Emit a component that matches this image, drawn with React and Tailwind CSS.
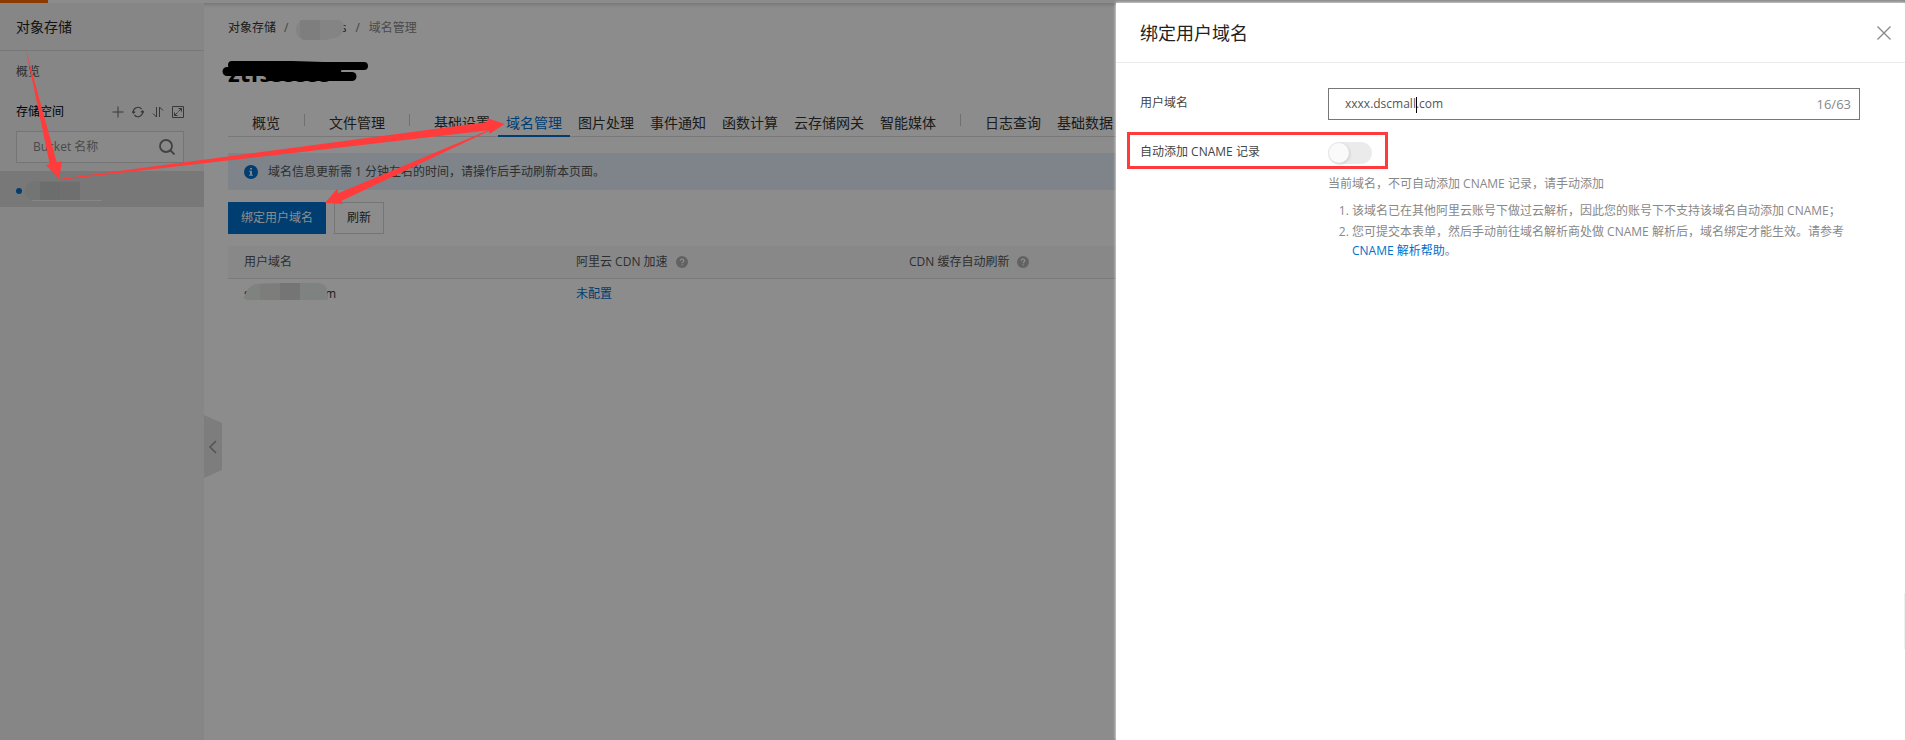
import { useState } from "react";

const tabs = [
  "概览", "|", "文件管理", "|", "基础设置", "域名管理", "图片处理", "事件通知",
  "函数计算", "云存储网关", "智能媒体", "|", "日志查询", "基础数据",
];

function HelpIcon() {
  return (
    <svg className="ml-2 h-3 w-3 shrink-0" viewBox="0 0 12 12">
      <circle cx="6" cy="6" r="6" fill="#b3b3b3" />
      <path d="M4.3 4.8c0-2.3 3.5-2.2 3.5 0 0 1.2-1.7 1.3-1.7 2.5M6.1 8.3v1.2" fill="none" stroke="#fff" strokeWidth="1.2" />
    </svg>
  );
}

function Sidebar() {
  return (
    <aside className="w-[204px] shrink-0 bg-[#f4f4f4]">
      <h2 className="border-b border-[#dcdcdc] px-4 pt-3.5 pb-[13px] text-sm leading-5 text-[#222]">对象存储</h2>
      <a href="#overview" className="mt-[11px] block px-4 text-xs leading-5 text-[#555]">概览</a>
      <div className="mt-5 flex items-center justify-between pr-5 pl-4">
        <span className="text-xs leading-5 text-black">存储空间</span>
        <div className="flex gap-2 text-[#666]">
          <button aria-label="新建">
            <svg className="h-3 w-3" viewBox="0 0 12 12" fill="none" stroke="currentColor"><path d="M6 .5v11M.5 6h11" /></svg>
          </button>
          <button aria-label="刷新列表">
            <svg className="h-3 w-3" viewBox="0 0 12 12" fill="none" stroke="currentColor" strokeWidth="1.1">
              <path d="M1.4 6.8A4.6 4.6 0 0 1 9.6 3.2M10.6 5.2A4.6 4.6 0 0 1 2.4 8.8" />
              <path d="M0 5.2l1.4 2 1.8-1.6M12 6.8l-1.4-2-1.8 1.6" />
            </svg>
          </button>
          <button aria-label="排序">
            <svg className="h-3 w-3" viewBox="0 0 12 12" fill="none" stroke="currentColor"><path d="M4.5 1v10L1 7.500M7.500 11V1L11 4.500" /></svg>
          </button>
          <button aria-label="展开">
            <svg className="h-3 w-3" viewBox="0 0 12 12" fill="none" stroke="currentColor">
              <path d="M.5.5h11v11H.500zM6.500 2.500h3v3M9.500 2.500L6.500 5.500M2.500 6.500v3h3M2.500 9.500l3-3" />
            </svg>
          </button>
        </div>
      </div>
      <label className="mt-[9px] mr-5 ml-4 flex h-8 items-center border border-[#d5d5d5] bg-[#fafafa] pr-2 pl-4">
        <input
          aria-label="Bucket 名称"
          placeholder="Bucket 名称"
          className="w-full min-w-0 bg-transparent text-xs leading-5 outline-none placeholder:text-[#888]"
        />
        <svg className="h-4 w-4 shrink-0" viewBox="0 0 16 16" fill="none" stroke="#777" strokeWidth="1.8">
          <circle cx="7" cy="7" r="6" />
          <path d="M11.500 11.500l4 4" />
        </svg>
      </label>
      <div className="mt-2 flex h-9 items-center bg-[#dadada] px-4 pt-1">
        <span className="h-1.5 w-1.5 rounded-full bg-[#0070cc]" />
      </div>
    </aside>
  );
}

function Tabs() {
  return (
    <nav className="mt-4 flex h-[34px] items-stretch border-b border-[#dcdcdc] pl-4 text-sm leading-5 whitespace-nowrap text-[#333]">
      {tabs.map((tab, i) =>
        tab === "|" ? (
          <span key={i} className="mx-4 my-auto h-3 w-px shrink-0 bg-[#ccc]" />
        ) : (
          <a
            key={i}
            href={`#tab-${i}`}
            className={
              tab === "域名管理"
                ? "-mb-px shrink-0 border-b-2 border-[#0070cc] px-2 pt-2.5 text-[#0070cc]"
                : "shrink-0 px-2 pt-2.5"
            }
          >
            {tab}
          </a>
        )
      )}
    </nav>
  );
}

function DomainTable() {
  return (
    <table className="mt-3 w-full table-fixed border-collapse text-left text-xs leading-5">
      <colgroup>
        <col className="w-[332px]" />
        <col className="w-[333px]" />
        <col />
      </colgroup>
      <thead>
        <tr className="h-8 border-b border-[#dedede] bg-[#f8f8f8] text-[#555]">
          <th className="px-4 font-normal">用户域名</th>
          <th className="px-4 font-normal">
            <span className="flex items-center">阿里云 CDN 加速<HelpIcon /></span>
          </th>
          <th className="px-4 font-normal">
            <span className="flex items-center">CDN 缓存自动刷新<HelpIcon /></span>
          </th>
        </tr>
      </thead>
      <tbody>
        <tr className="h-8 text-[#333]">
          <td className="px-4">
            <span className="flex w-[92px] justify-between"><span>s</span><span>m</span></span>
          </td>
          <td className="px-4"><a href="#cdn" className="text-[#0070cc]">未配置</a></td>
          <td />
        </tr>
      </tbody>
    </table>
  );
}

function Content() {
  return (
    <main className="min-w-0 flex-1 overflow-hidden px-6">
      <div className="flex pt-[15px] text-xs leading-5 text-[#333]">
        <a href="#oss">对象存储</a>
        <span className="ml-2 text-[#777]">/</span>
        <span className="w-[58px] text-right">s</span>
        <span className="mx-[9px] text-[#777]">/</span>
        <span className="text-[#888]">域名管理</span>
      </div>
      <h1 className="mt-[21px] text-2xl leading-7 font-bold text-black">ztfssssss</h1>
      <Tabs />
      <div className="mt-4 flex h-[37px] items-center bg-[#e5f0fa] pl-4 text-xs leading-5 text-[#555]">
        <svg className="mr-2.5 h-3.5 w-3.5" viewBox="0 0 14 14">
          <circle cx="7" cy="7" r="7" fill="#0070cc" />
          <path d="M6 3h2v1.600H6zM5.200 5.800H8v4h1v1H5v-1h1v-3h-.800z" fill="#e5f0fa" />
        </svg>
        域名信息更新需 1 分钟左右的时间，请操作后手动刷新本页面。
      </div>
      <div className="mt-3 flex gap-2 text-xs leading-5">
        <button className="h-8 bg-[#0070cc] px-[13px] text-white">绑定用户域名</button>
        <button className="h-8 border border-[#d5d5d5] px-3 text-[#333]">刷新</button>
      </div>
      <DomainTable />
    </main>
  );
}

function Drawer() {
  const [domain, setDomain] = useState("xxxx.dscmall.com");
  const [auto, setAuto] = useState(false);
  return (
    <section
      role="dialog"
      aria-label="绑定用户域名"
      className="absolute top-[3px] right-0 bottom-0 w-[789px] max-w-full bg-white shadow-[0_0_3px_#fff]"
    >
      <header className="flex h-[60px] items-center justify-between border-b border-[#ebebeb] pr-3.5 pl-6">
        <h2 className="text-lg leading-6 text-[#222]">绑定用户域名</h2>
        <button aria-label="关闭">
          <svg className="h-3.5 w-3.5" viewBox="0 0 14 14" fill="none" stroke="#888" strokeWidth="1.3">
            <path d="M.500.500l13 13M13.500.500l-13 13" />
          </svg>
        </button>
      </header>
      <form className="pt-[25px] pr-[45px] pl-6 text-xs leading-5 text-[#444]">
        <div className="flex">
          <label htmlFor="domain" className="w-[188px] shrink-0 pt-[5px]">用户域名</label>
          <div className="relative flex h-8 flex-1 items-center border border-[#777] pr-2 pl-4">
            <input
              id="domain"
              value={domain}
              maxLength={63}
              onChange={(e) => setDomain(e.target.value)}
              className="min-w-0 flex-1 text-xs leading-5 text-[#555] outline-none"
            />
            <span className="absolute top-2 left-[87px] h-4 w-px bg-black" />
            <span className="text-[13px] text-[#888]">{domain.length}/63</span>
          </div>
        </div>
        <div className="relative mt-[22px] flex h-[22px] items-center">
          <label htmlFor="cname" className="w-[188px] shrink-0 pb-0.5">自动添加 CNAME 记录</label>
          <input
            id="cname"
            type="checkbox"
            role="switch"
            checked={auto}
            onChange={(e) => setAuto(e.target.checked)}
            className="h-[22px] w-11 appearance-none rounded-full bg-[#ebebeb] before:block before:h-5 before:w-5 before:translate-x-px before:translate-y-px before:rounded-full before:bg-[#fafafa] before:shadow-[1px_1px_3px_#ccc] checked:bg-[#0070cc] checked:before:translate-x-[23px]"
          />
          <span className="absolute -top-2.5 -left-[13px] h-[37px] w-[261px] border-[3px] border-[#ff3b3b]" />
        </div>
        <div className="ml-[188px] text-[#888]">
          <p className="mt-2.5">当前域名，不可自动添加 CNAME 记录，请手动添加</p>
          <ol className="mt-[7px] list-decimal pl-6 leading-[19px]">
            <li className="mb-0.5">该域名已在其他阿里云账号下做过云解析，因此您的账号下不支持该域名自动添加 CNAME；</li>
            <li>
              您可提交本表单，然后手动前往域名解析商处做 CNAME 解析后，域名绑定才能生效。请参考{" "}
              <a href="#help" className="whitespace-nowrap text-[#0070cc]">CNAME 解析帮助</a>。
            </li>
          </ol>
        </div>
      </form>
      <span className="absolute top-[590px] right-0 h-14 w-px bg-[#f0f0f0]" />
    </section>
  );
}

// arrows and smudges drawn over the whole page
function Annotations() {
  return (
    <svg className="pointer-events-none absolute top-0 left-0" width="560" height="310" viewBox="0 0 560 310">
      <path d="M35 181h45v20H35a10 10 0 0 1 0-20z" fill="#727574" />
      <path d="M40 182h20v18H40z" fill="#6c6e6d" />
      <path d="M60 182h20v18H60z" fill="#6f6f6f" />
      <path d="M32 200.500h70" stroke="#868686" />
      <path d="M306 20h33q5 1 5 8 0 7-9 10l-10 2h-20q-9-2-9-10 0-9 10-10z" fill="#848484" />
      <path d="M300 20h20v20h-14q-6 0-6-6z" fill="#7e7e7e" />
      <path d="M255 284l14-1h50q9 2 8 9l1 8h-80q-4 0-3-4 1-8 10-12z" fill="#7e8281" />
      <path d="M260 284h20v16h-20z" fill="#7d7d7c" />
      <path d="M280 283h20v17h-20z" fill="#757575" />
      <g fill="none" stroke="#000" strokeLinecap="round" strokeLinejoin="round">
        <path d="M232 65h60l32 1h40" strokeWidth="8" />
        <path d="M227 71.500h50l60-2M240 71h70" strokeWidth="9" />
        <path d="M270 76.500h82" strokeWidth="9" />
      </g>
      <g fill="#ff3b3b">
        <path d="M26 50L56.700 162.300 62 161.300 59 179 46 165 49.700 164z" />
        <path d="M59 179L487.500 122 487 118 504.500 124 489.500 134 489 130.300 59 180z" />
        <path d="M489 130L338.300 193.300 337 189 325 203 342.700 204 341.700 200.700 489 131z" />
      </g>
    </svg>
  );
}

export default function App() {
  return (
    <div className="relative flex min-h-screen flex-col overflow-hidden bg-white font-['Open_Sans','Noto_Sans_CJK_SC',sans-serif]">
      <div className="h-[3px] bg-white shadow-[0_1px_4px_#bbb]">
        <div className="h-full w-12 bg-[#ff6a00]" />
      </div>
      <div className="relative flex flex-1">
        <Sidebar />
        <Content />
        <button aria-label="收起" className="absolute top-[412px] left-[204px]">
          <svg className="h-[63px] w-[18px]" viewBox="0 0 18 63">
            <path d="M0 0l18 8v47L0 63z" fill="#e4e4e4" />
            <path d="M12 26l-6 6 6 6" fill="none" stroke="#999" strokeWidth="1.600" />
          </svg>
        </button>
      </div>
      <div className="absolute inset-0 bg-black/45" />
      <Drawer />
      <Annotations />
    </div>
  );
}
